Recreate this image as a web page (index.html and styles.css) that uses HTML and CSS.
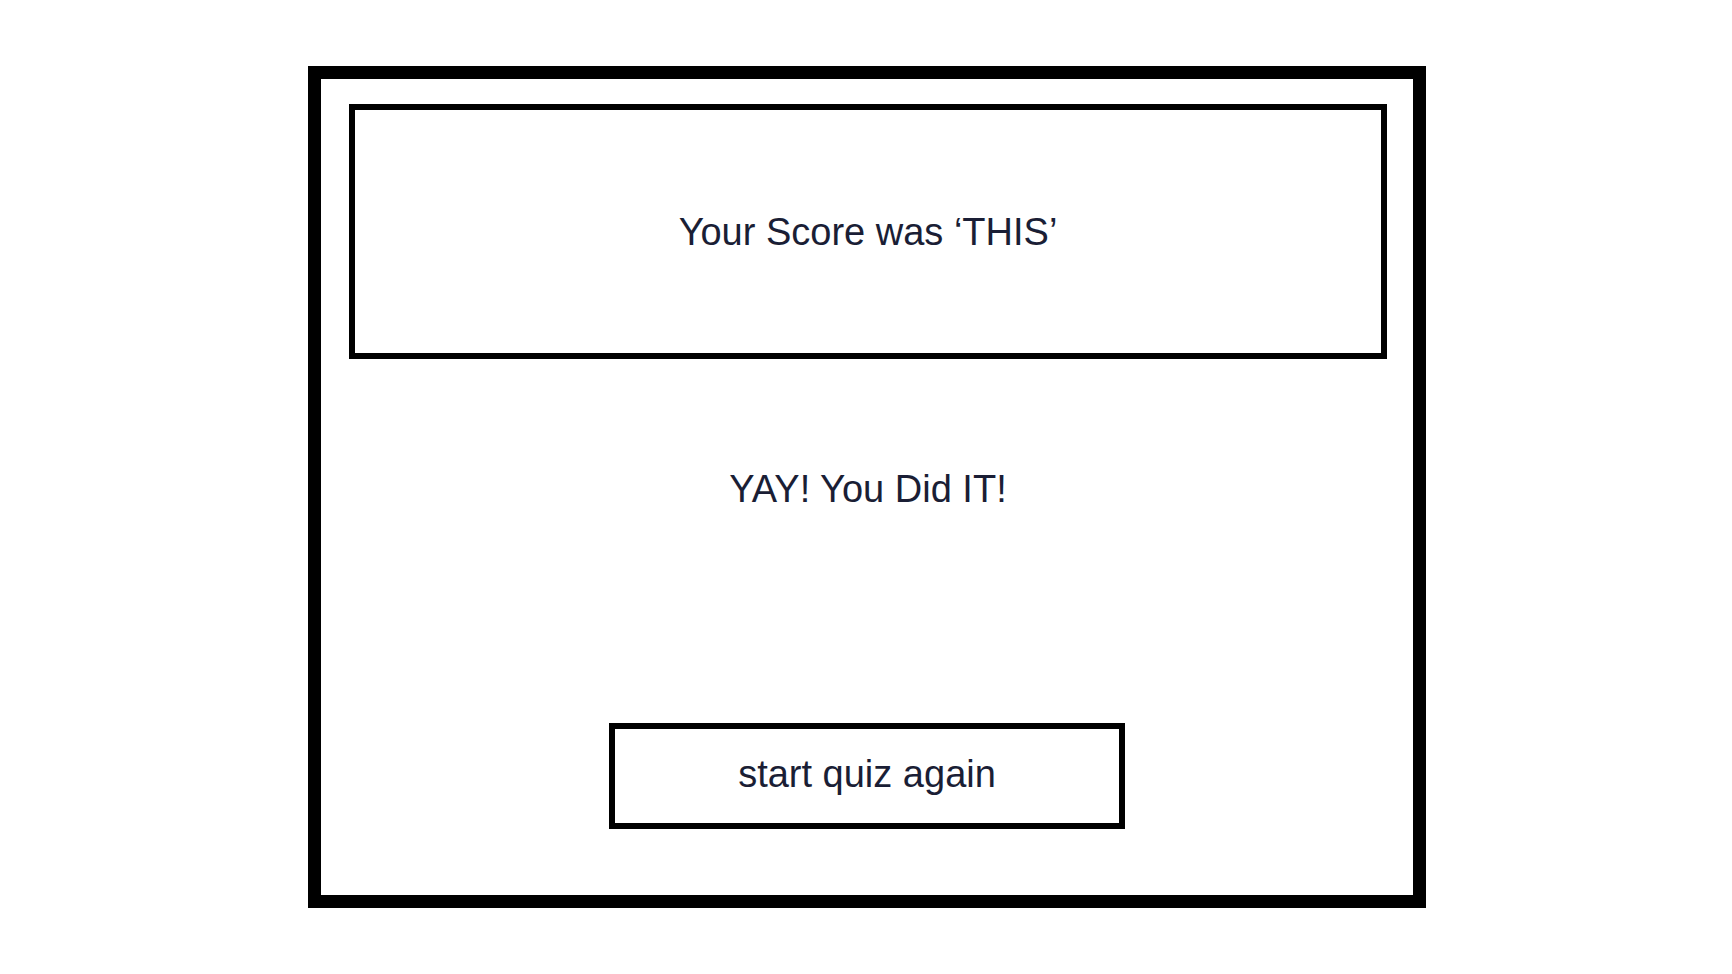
FILE: index.html
```html
<!DOCTYPE html>
<html lang="en">
<head>
<meta charset="utf-8">
<title>Quiz Result</title>
<link rel="stylesheet" href="styles.css">
</head>
<body>
<main class="frame">
  <section class="score-box">
    <p class="score-text">Your Score was ‘THIS’</p>
  </section>
  <p class="message">YAY! You Did IT!</p>
  <button class="restart" type="button">start quiz again</button>
</main>
</body>
</html>
```

FILE: styles.css
```css
html, body {
  margin: 0;
  padding: 0;
  background: #ffffff;
}

body {
  font-family: "Liberation Sans", Arial, sans-serif;
  color: #1a1e35;
  padding: 66px 0 0 308px;
}

.frame {
  box-sizing: border-box;
  width: 1118px;
  height: 842px;
  border: 13px solid #000;
  padding: 25px 26px 0 28px;
  display: flex;
  flex-direction: column;
  align-items: flex-start;
}

.score-box {
  box-sizing: border-box;
  width: 1038px;
  height: 255px;
  border: 6px solid #000;
  padding-top: 103px;
}

.score-text {
  margin: 0;
  font-size: 38px;
  line-height: 1;
  text-align: center;
}

.message {
  margin: 111px 0 0 0;
  width: 1038px;
  font-size: 38px;
  line-height: 1;
  text-align: center;
}

.restart {
  box-sizing: border-box;
  margin: 215px 0 0 260px;
  width: 516px;
  height: 106px;
  border: 6px solid #000;
  background: #fff;
  color: #1a1e35;
  font-family: "Liberation Sans", Arial, sans-serif;
  font-size: 38px;
  line-height: 1;
  padding: 0 0 4px 0;
  text-align: center;
  cursor: pointer;
}
```
